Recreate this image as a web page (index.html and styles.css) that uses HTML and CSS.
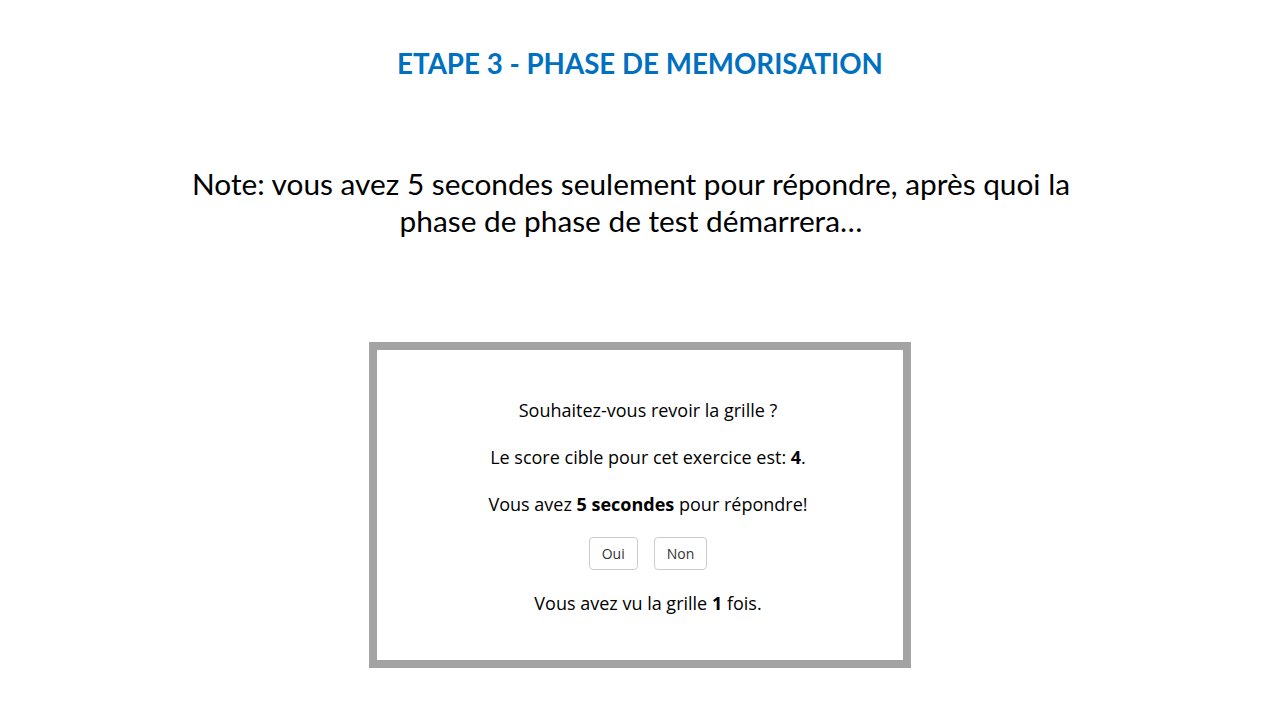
FILE: index.html
```html
<!DOCTYPE html>
<html lang="fr">
<head>
<meta charset="utf-8">
<title>Etape 3 - Phase de mémorisation</title>
<link rel="stylesheet" href="styles.css">
</head>
<body>
<main class="page">
  <h1 class="title">ETAPE 3 - PHASE DE MEMORISATION</h1>
  <p class="note">Note: vous avez 5 secondes seulement pour répondre, après quoi la<br>phase de phase de test démarrera…</p>
  <section class="box">
    <p class="line">Souhaitez-vous revoir la grille ?</p>
    <p class="line">Le score cible pour cet exercice est: <b>4</b>.</p>
    <p class="line">Vous avez <b>5 secondes</b> pour répondre!</p>
    <div class="actions">
      <button class="btn btn-oui" type="button">Oui</button>
      <button class="btn btn-non" type="button">Non</button>
    </div>
    <p class="line">Vous avez vu la grille <b>1</b> fois.</p>
  </section>
</main>
</body>
</html>
```
FILE: styles.css
```css
html, body {
  margin: 0;
  padding: 0;
  background: #ffffff;
}

.page {
  width: 1280px;
  height: 720px;
  display: flex;
  flex-direction: column;
  align-items: center;
}

.title {
  margin: 46px 0 0;
  font-family: Lato, "Liberation Sans", sans-serif;
  font-weight: 700;
  font-size: 27.7px;
  line-height: 36px;
  color: #0070c0;
}

.note {
  margin: 83px 18px 0 0;
  font-family: Lato, "Liberation Sans", sans-serif;
  font-size: 29.8px;
  line-height: 37px;
  color: #000000;
  text-align: center;
}

.box {
  margin-top: 103px;
  width: 510px;
  box-sizing: content-box;
  border: 8px solid #a3a3a3;
  padding: 48px 0 45px 16px;
  display: flex;
  flex-direction: column;
  align-items: center;
  font-family: "Open Sans", sans-serif;
  font-size: 18px;
  color: #000000;
}

.line {
  margin: 0;
  line-height: 24px;
}

.line + .line {
  margin-top: 23px;
}

.line b {
  font-weight: 700;
}

.actions {
  display: flex;
  gap: 16px;
  margin: 21px 0;
}

.btn {
  font-family: "Open Sans", sans-serif;
  font-size: 14px;
  color: #333333;
  background: #ffffff;
  border: 1px solid #cccccc;
  border-radius: 4px;
  height: 33px;
  padding: 0 12px;
  line-height: 31px;
}
```
